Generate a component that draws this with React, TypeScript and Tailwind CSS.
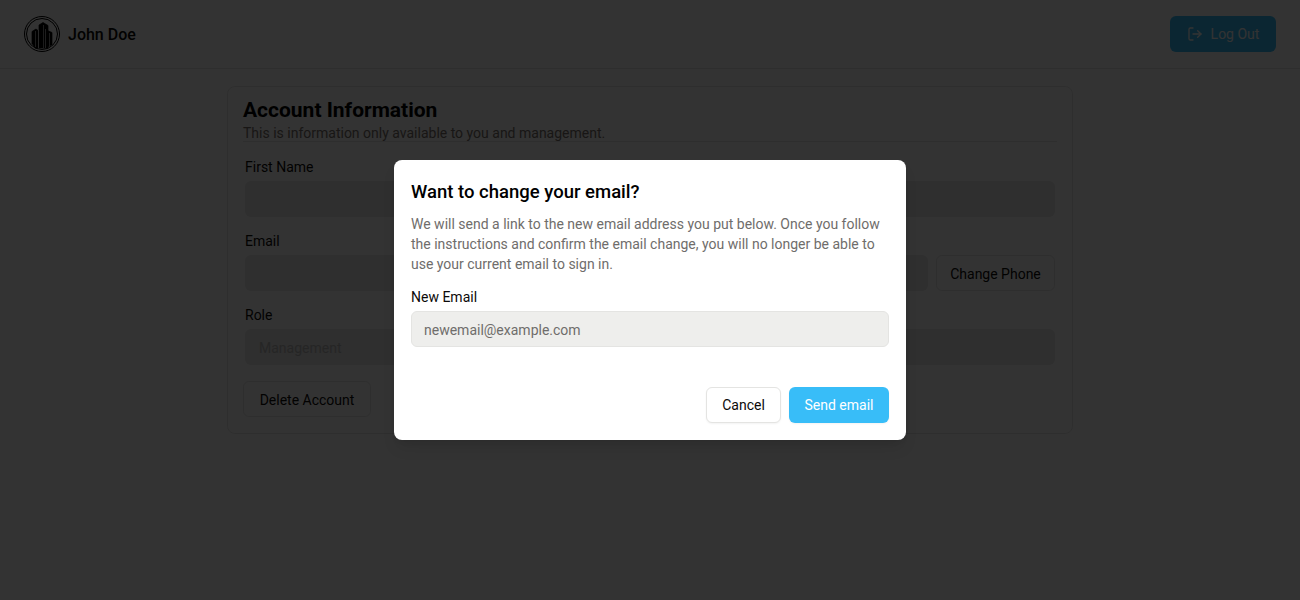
import { LogOut } from "lucide-react";

const font = "font-['Roboto','Noto_Sans',sans-serif]";

function Logo() {
  return (
    <svg viewBox="0 0 36 36" className="w-9 h-9" fill="none" stroke="#000">
      <circle cx="18" cy="18" r="17.5" strokeWidth="1" />
      <circle cx="18" cy="18" r="15.5" strokeWidth="1" />
      {/* left tower */}
      <path d="M8 28V15.500l4-2.500 2 1.500V32H11" fill="#000" strokeWidth="0.7" />
      {/* middle tower */}
      <path d="M15 32V9l4-2.500 5 3V32z" fill="#000" strokeWidth="0.7" />
      {/* right tower */}
      <path d="M22 32V13.500l2.500 1.500 3.500 1.500V29" fill="#000" strokeWidth="0.7" />
      {/* lit faces between the towers */}
      <path d="M11.500 15v16M19.500 9v23M25.500 17v14" stroke="#8a8a8a" strokeWidth="1" />
      <path d="M14.500 14v18M21.500 13v19" stroke="#fff" strokeWidth="0.6" />
    </svg>
  );
}

function Field({ label, placeholder, action }: { label?: string; placeholder?: string; action?: boolean | string }) {
  return (
    <div className="flex flex-col">
      <label className="text-sm leading-5 h-5 text-stone-950 -mt-1">{label}</label>
      <div className="flex gap-2 mt-[4px]">
        <input
          disabled
          placeholder={placeholder}
          className="flex-1 min-w-0 h-9 px-3.5 pt-0.5 rounded-md bg-[#e8e8e8] text-sm placeholder:text-[#bbbbbb]"
        />
        {action && (
          <button className="h-9 w-[119px] shrink-0 rounded-md border border-[#e6e6e6] bg-white pt-0.5 text-sm text-stone-950">
            {action}
          </button>
        )}
      </div>
    </div>
  );
}

export default function App() {
  return (
    <div className={`${font} relative min-h-[600px] bg-white overflow-hidden`}>
      <header className="h-[69px] border-b border-[#e6e6e6] flex items-center justify-between px-6">
        <div className="flex items-center gap-2">
          <Logo />
          <span className="text-base font-medium text-stone-950 pt-0.5">John Doe</span>
        </div>
        <button className="flex items-center justify-center gap-2 w-[106px] h-9 rounded-md bg-[#38bdf8] text-sm text-white">
          <LogOut className="w-4 h-4" />
          Log Out
        </button>
      </header>

      <main className="w-[846px] mx-auto mt-[17px] border border-[#e6e6e6] rounded-lg px-[15px] pt-[9px] pb-[16px]">
        <h2 className="text-[21px] font-bold leading-7 mb-px text-black">Account Information</h2>
        <p className="text-sm leading-5 text-stone-500 -mt-0.5 border-b border-[#e6e6e6] h-[19px]">
          This is information only available to you and management.
        </p>
        <div className="grid grid-cols-2 gap-x-4 gap-y-[18px] mx-0.5 mt-[19px]">
          <Field label="First Name" />
          <Field />
          <Field label="Email" action />
          <Field action="Change Phone" />
          <Field label="Role" placeholder="Management" />
          <Field />
        </div>
        <button className="mt-4 w-[128px] h-9 rounded-md border border-[#e6e6e6] bg-white pt-0.5 text-sm text-stone-950">
          Delete Account
        </button>
      </main>

      {/* dialog overlay */}
      <div className="absolute inset-0 bg-black/80 flex justify-center items-start">
        <div className="mt-[160px] w-[512px] h-[280px] bg-white rounded-lg shadow-lg p-[17px] flex flex-col">
          <h3 className="text-[18.5px] font-medium leading-7 mt-px text-black">Want to change your email?</h3>
          <p className="text-sm leading-5 text-[#6f6d6b] mt-[8px]">
            We will send a link to the new email address you put below. Once you follow the instructions and confirm
            the email change, you will no longer be able to use your current email to sign in.
          </p>
          <label className="text-sm leading-5 text-stone-950 mt-[13px]">New Email</label>
          <input
            placeholder="newemail@example.com"
            className="mt-1 h-9 px-3 pt-0.5 rounded-md bg-[#eeeeec] border border-[#e4e4e2] text-sm placeholder:text-[#6f6d6b] shrink-0"
          />
          <div className="mt-auto flex justify-end gap-2">
            <button className="w-[75px] h-9 rounded-md border border-[#e4e4e2] bg-white text-sm text-stone-950 shadow-xs">
              Cancel
            </button>
            <button className="w-[100px] h-9 rounded-md bg-[#38bdf8] text-sm text-white shadow-xs">Send email</button>
          </div>
        </div>
      </div>
    </div>
  );
}
